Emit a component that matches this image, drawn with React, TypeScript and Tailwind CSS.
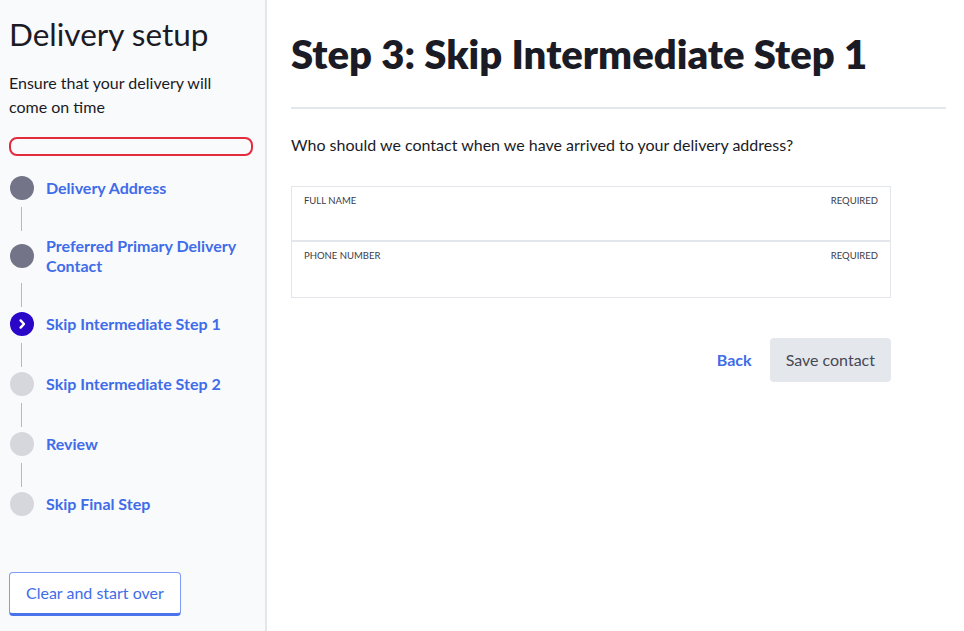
import React from 'react';

type StepState = 'done' | 'current' | 'todo';

const steps: { label: string; state: StepState }[] = [
  { label: 'Delivery Address', state: 'done' },
  { label: 'Preferred Primary Delivery Contact', state: 'done' },
  { label: 'Skip Intermediate Step 1', state: 'current' },
  { label: 'Skip Intermediate Step 2', state: 'todo' },
  { label: 'Review', state: 'todo' },
  { label: 'Skip Final Step', state: 'todo' },
];

const StepDot: React.FC<{ state: StepState }> = ({ state }) => {
  if (state === 'current') {
    return (
      <div className="w-6 h-6 rounded-full bg-[#2a06c9] flex items-center justify-center shrink-0">
        <svg width="12" height="12" viewBox="0 0 12 12" fill="none">
          <path d="M4.6 2.4 L8 6 L4.6 9.6" stroke="white" strokeWidth="2.4" strokeLinecap="round" strokeLinejoin="round" />
        </svg>
      </div>
    );
  }
  return (
    <div className={`w-6 h-6 rounded-full shrink-0 ${state === 'done' ? 'bg-[#737487]' : 'bg-[#d6d7dd]'}`} />
  );
};

const Field: React.FC<{ label: string; last?: boolean }> = ({ label, last }) => (
  <div className={`h-[55px] px-3 pt-[7px] flex justify-between text-[9.5px] uppercase text-[#3b3b48] ${last ? '' : 'border-b-2 border-[#e3e6ea]'}`}>
    <span>{label}</span>
    <span>Required</span>
  </div>
);

export default function App() {
  return (
    <div className="flex min-h-screen bg-white text-[#1b1b26]" style={{ fontFamily: 'Lato, "Noto Sans", sans-serif' }}>
      <aside className="w-[267px] shrink-0 bg-[#f9fafc] border-r-2 border-[#e3e6ea] px-[9px] pt-[16px] pb-[15px] flex flex-col min-h-screen">
        <h1 className="text-[31.5px] leading-9 font-normal">Delivery setup</h1>
        <p className="mt-[19px] text-[16px] leading-6 pr-[30px]">Ensure that your delivery will come on time</p>
        <div className="mt-[18px] h-[19px] w-[244px] rounded-lg border-2 border-[#e22b3c]" />
        <ol className="mt-[20px]">
          {steps.map((s, i) => (
            <li key={s.label}>
              <div className="flex items-center gap-3 pl-px">
                <StepDot state={s.state} />
                <span className="text-[16px] leading-5 font-bold text-[#3f6ce9] max-w-[200px]">{s.label}</span>
              </div>
              {i < steps.length - 1 && <div className="ml-[12px] mt-[7px] mb-[5px] h-6 w-px bg-[#b8b8c2]" />}
            </li>
          ))}
        </ol>
        <div className="mt-auto">
          <button className="h-[44px] px-4 rounded bg-white border border-[#7f9cf0] border-b-[3px] border-b-[#4a72ea] text-[16px] text-[#3f6ce9]">
            Clear and start over
          </button>
        </div>
      </aside>
      <main className="flex-1 pl-[24px] pr-[18px] pt-[29px]">
        <h2 className="text-[40px] leading-[50px] font-extrabold">Step 3: Skip Intermediate Step 1</h2>
        <hr className="mt-[28px] border-0 h-[2px] bg-[#e3e6ea]" />
        <p className="mt-[26px] text-[16px] leading-5">Who should we contact when we have arrived to your delivery address?</p>
        <div className="mt-[31px] w-[600px] border border-[#e3e6ea]">
          <Field label="Full name" />
          <Field label="Phone number" last />
        </div>
        <div className="w-[600px] mt-[40px] flex justify-end items-center gap-[18px]">
          <button className="text-[16px] font-bold text-[#3f6ce9]">Back</button>
          <button className="h-[44px] px-4 rounded bg-[#e4e7eb] text-[16px] text-[#474756]">Save contact</button>
        </div>
      </main>
    </div>
  );
}
